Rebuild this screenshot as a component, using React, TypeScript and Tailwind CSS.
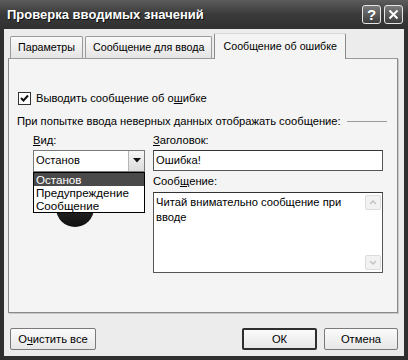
import React from "react";

const font = { fontFamily: '"Liberation Sans", Arial, sans-serif' };

function TitleButton({ children }: { children: React.ReactNode }) {
  return (
    <div className="w-[19px] h-[19px] rounded-[3px] border border-[#e6e6e6] bg-gradient-to-b from-[#7a7a7a] to-[#3e3e3e] flex items-center justify-center text-white">
      {children}
    </div>
  );
}

function Tab({ label, active }: { label: string; active?: boolean }) {
  if (active) {
    return (
      <div className="h-[26px] -mb-px px-[8px] flex items-center bg-[#f4f4f4] border border-b-0 border-[#8a8a8a] rounded-t-[2px] z-10 border-t-[#d8d8d8]">
        {label}
      </div>
    );
  }
  return (
    <div className="h-[22px] px-[7px] flex items-center bg-gradient-to-b from-[#fafafa] to-[#e4e4e4] border border-b-0 border-[#9a9a9a] rounded-t-[2px] mr-[2px]">
      {label}
    </div>
  );
}

function Button({ label, underline, def }: { label: string; underline?: number; def?: boolean }) {
  const text =
    underline === undefined ? (
      label
    ) : (
      <>
        {label.slice(0, underline)}
        <span className="underline">{label[underline]}</span>
        {label.slice(underline + 1)}
      </>
    );
  return (
    <div
      className={
        "h-[22px] flex items-center justify-center bg-gradient-to-b from-[#fbfbfb] to-[#e6e6e6] rounded-[2px] " +
        (def ? "border-2 border-[#2e2e2e]" : "border border-[#7a7a7a]")
      }
    >
      {text}
    </div>
  );
}

export default function App() {
  return (
    <div className="w-[408px] h-[360px] bg-[#2f2f2f] flex flex-col text-[11.2px] text-black" style={font}>
      {/* title bar */}
      <div className="h-[29px] shrink-0 flex items-center pl-[7px] pr-[5px] bg-gradient-to-b from-[#5c5c5c] via-[#3a3a3a] to-[#303030]">
        <div className="flex-1 text-white font-bold text-[13px] [text-shadow:1px_1px_0_#111]">
          Проверка вводимых значений
        </div>
        <div className="flex gap-[3px]">
          <TitleButton>
            <span className="font-bold text-[15px] leading-none">?</span>
          </TitleButton>
          <TitleButton>
            <svg width="11" height="11" viewBox="0 0 11 11">
              <path d="M1.5 1.5 L9.5 9.5 M9.5 1.5 L1.5 9.5" stroke="white" strokeWidth="2" />
            </svg>
          </TitleButton>
        </div>
      </div>

      {/* body */}
      <div className="flex-1 mx-[4px] mb-[4px] bg-[#ececec] flex flex-col pl-[4px] pr-[6px] pt-[4px]">
        {/* tabs */}
        <div className="flex items-end pl-[2px] h-[25px] text-[10.7px]">
          <Tab label="Параметры" />
          <Tab label="Сообщение для ввода" />
          <Tab label="Сообщение об ошибке" active />
        </div>

        {/* panel */}
        <div className="h-[255px] bg-[#f4f4f4] border border-[#8a8a8a] border-t-[#9a9a9a] shadow-[1px_1px_0_#c8c8c8] pt-[31px] pl-[8px] pr-[14px]">
          <div className="flex items-center gap-[4px] pl-[1px]">
            <div className="w-[13px] h-[13px] border border-[#333] bg-white flex items-center justify-center">
              <svg width="9" height="9" viewBox="0 0 9 9">
                <path d="M1 4 L3.5 6.5 L8 1.5" stroke="#111" strokeWidth="2" fill="none" />
              </svg>
            </div>
            <span className="pl-[1px]">
              Выводить сообщение об о<span className="underline">ш</span>ибке
            </span>
          </div>

          <div className="flex items-center mt-[6px]">
            <span>При попытке ввода неверных данных отображать сообщение:</span>
            <div className="flex-1 ml-[6px] mr-[-4px] h-0 border-t border-[#9a9a9a] border-b-white"></div>
          </div>

          <div className="flex mt-[2px] pl-[16px]">
            {/* left column */}
            <div className="w-[112px] relative">
              <div className="h-[18px] flex items-center">
                <span className="underline">В</span>ид:
              </div>
              <div className="h-[22px] bg-white border border-[#7a7a7a] flex items-center">
                <span className="flex-1 pl-[2px]">Останов</span>
                <div className="w-[16px] h-[20px] bg-gradient-to-b from-[#f6f6f6] to-[#dcdcdc] border-l border-[#b5b5b5] flex items-center justify-center">
                  <svg width="8" height="5" viewBox="0 0 8 5">
                    <path d="M0 0 H8 L4 4.5 Z" fill="#111" />
                  </svg>
                </div>
              </div>
              <div className="mt-[17px] ml-[23px] w-[38px] h-[38px] rounded-full bg-gradient-to-b from-[#3a3a3a] to-[#111]"></div>
              {/* dropdown list overlay */}
              <div className="absolute left-0 top-[40px] w-[112px] bg-white border border-black flex flex-col leading-[13px] text-[11.6px]">
                <div className="bg-[#4a4a4a] text-white px-[2px] h-[13px]">Останов</div>
                <div className="px-[2px] h-[13px]">Предупреждение</div>
                <div className="px-[2px] h-[13px]">Сообщение</div>
              </div>
            </div>

            {/* right column */}
            <div className="flex-1 ml-[8px] flex flex-col">
              <div className="h-[18px] flex items-center">
                <span className="underline">З</span>аголовок:
              </div>
              <div className="h-[21px] bg-white border border-[#555] border-t-[#333] flex items-center pl-[2px]">
                Ошибка!
              </div>
              <div className="h-[21px] flex items-center">
                Сооб<span className="underline">щ</span>ение:
              </div>
              <div className="h-[81px] bg-white border border-[#555] border-t-[#333] flex">
                <div className="flex-1 pl-[2px] pt-[2px] leading-[15px]">
                  Читай внимательно сообщение при
                  <br />
                  вводе
                </div>
                <div className="w-[16px] flex flex-col justify-between py-[2px] mr-[1px]">
                  <div className="h-[15px] bg-[#f2f2f2] border border-[#dcdcdc] rounded-[2px] flex items-center justify-center">
                    <svg width="8" height="5" viewBox="0 0 8 5">
                      <path d="M1 4 L4 1 L7 4" stroke="#c4c4c4" strokeWidth="1.5" fill="none" />
                    </svg>
                  </div>
                  <div className="h-[15px] bg-[#f2f2f2] border border-[#dcdcdc] rounded-[2px] flex items-center justify-center">
                    <svg width="8" height="5" viewBox="0 0 8 5">
                      <path d="M1 1 L4 4 L7 1" stroke="#c4c4c4" strokeWidth="1.5" fill="none" />
                    </svg>
                  </div>
                </div>
              </div>
            </div>
          </div>
        </div>

        {/* buttons */}
        <div className="flex mt-[15px] pl-[2px]">
          <div className="w-[86px]">
            <Button label="Очистить все" underline={1} />
          </div>
          <div className="flex-1"></div>
          <div className="w-[75px] mr-[7px]">
            <Button label="ОК" def />
          </div>
          <div className="w-[74px]">
            <Button label="Отмена" />
          </div>
        </div>
      </div>
    </div>
  );
}
